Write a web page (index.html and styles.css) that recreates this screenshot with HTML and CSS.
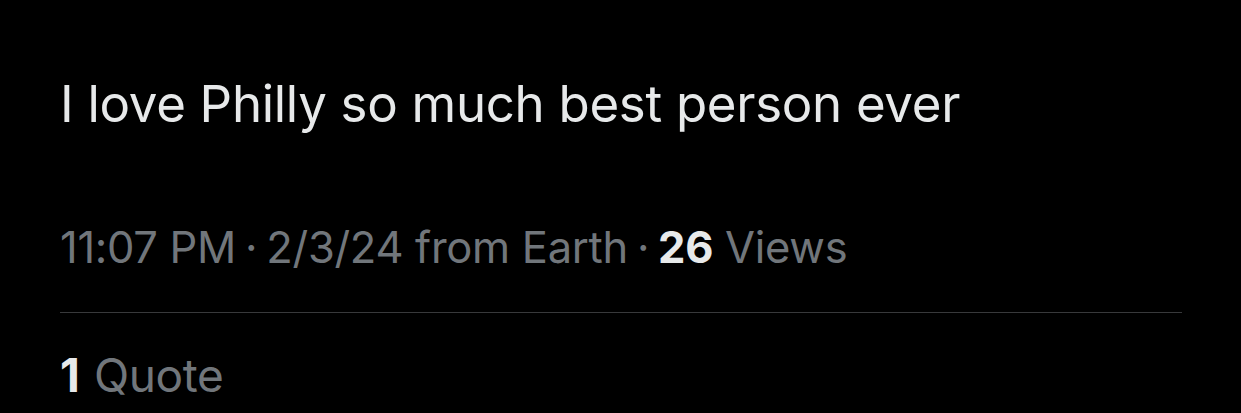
FILE: index.html
```html
<!DOCTYPE html>
<html lang="en">
<head>
    <meta charset="UTF-8">
    <title>Post</title>
    <link rel="stylesheet" href="styles.css">
</head>
<body>
    <div class="post">
        <p class="post-text">I love Philly so much best person ever</p>
        <div class="post-meta">
            <span>11:07 PM</span>
            <span class="dot">·</span>
            <span>2/3/24 from Earth</span>
            <span class="dot">·</span>
            <span><b class="count">26</b> Views</span>
        </div>
        <div class="post-stats">
            <span><b class="count stat-count">1</b> Quote</span>
        </div>
    </div>
</body>
</html>
```
FILE: styles.css
```css
body {
    margin: 0;
    padding: 0;
    background-color: #000000;
    font-family: Inter, "Noto Sans", sans-serif;
}
.post {
    padding: 0 59px 0 60px;
}
.post-text {
    margin: 0;
    padding-top: 74px;
    font-size: 51px;
    line-height: 60px;
    color: #e7e9ea;
    letter-spacing: -0.3px;
}
.post-meta {
    display: flex;
    gap: 9px;
    padding-top: 88px;
    padding-bottom: 40px;
    font-size: 43.5px;
    line-height: 50px;
    color: #71767b;
    letter-spacing: -0.3px;
    border-bottom: 1px solid #38393b;
}
.count {
    font-weight: 700;
    color: #e7e9ea;
}
.post-stats {
    padding-top: 37px;
    font-size: 46px;
    line-height: 50px;
    color: #71767b;
    letter-spacing: -0.4px;
}
.stat-count {
    margin-right: 2px;
}
```
